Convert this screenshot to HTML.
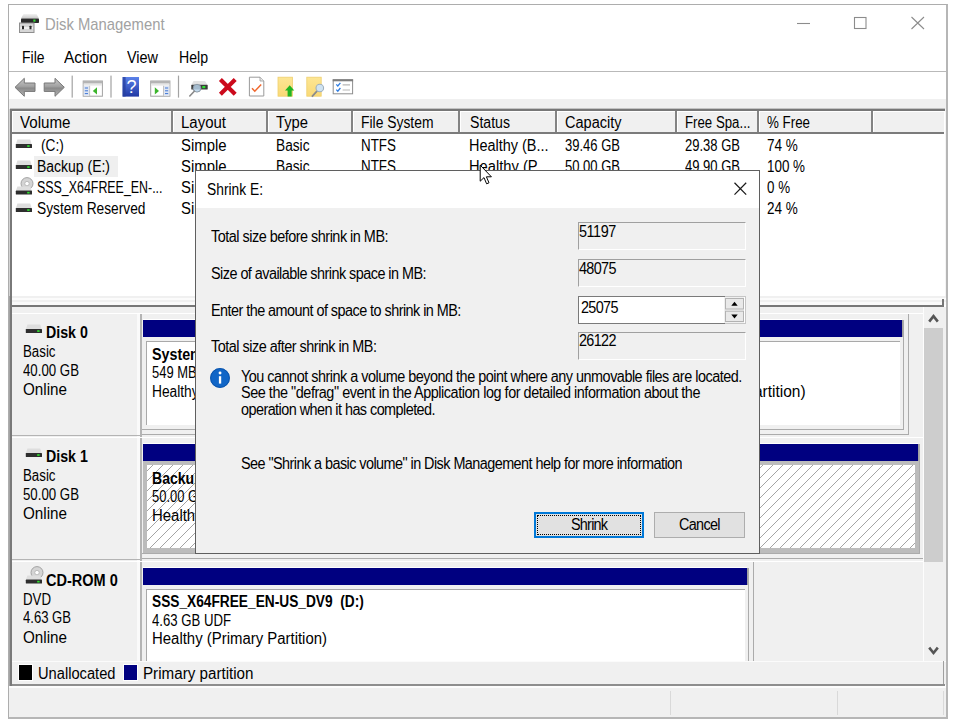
<!DOCTYPE html>
<html lang="en">
<head>
<meta charset="utf-8">
<title>Disk Management</title>
<style>
html,body{margin:0;padding:0;background:#fff;}
body{width:953px;height:723px;position:relative;overflow:hidden;font-family:"Liberation Sans",sans-serif;font-size:16px;color:#000;}
.a{position:absolute;}
.t{position:absolute;white-space:pre;line-height:20px;height:20px;transform-origin:0 50%;}
.hs{position:absolute;top:111px;width:2px;height:21px;background:#838383;border-right:1px solid #fff;}
.vbox{position:absolute;left:578px;width:166px;height:26px;background:#f0f0f0;border:1px solid;border-color:#a0a0a0 #fff #fff #a0a0a0;}
.navy{position:absolute;background:#000080;height:17px;}
.pbox{position:absolute;background:#fff;border-left:1px solid #a9a9a9;border-top:1px solid #a9a9a9;}
</style>
</head>
<body>
<div class="a" style="left:8px;top:4px;width:937px;height:712px;border:1px solid #adadad;border-right:2px solid #b6b6b6;border-bottom:2px solid #b6b6b6;background:#fff;"></div>
<svg class="a" style="left:18px;top:13px" width="23" height="21" viewBox="0 0 23 21">
<defs><linearGradient id="gt" x1="0" y1="0" x2="0" y2="1"><stop offset="0" stop-color="#f2f2f2"/><stop offset="1" stop-color="#c9c9c9"/></linearGradient></defs>
<path d="M5.5 1H18.5L21 5.5H3Z" fill="url(#gt)"/>
<rect x="3" y="5.5" width="18" height="4.5" rx="0.8" fill="#2b2b2b"/>
<rect x="15.3" y="6.5" width="2.2" height="2.2" fill="#35d335"/>
<rect x="1.5" y="10" width="14.5" height="9.5" fill="#d6d6d6" stroke="#8e8e8e" stroke-width="1"/>
<rect x="2.5" y="14" width="12.5" height="2" fill="#efefef"/>
<rect x="4" y="12.7" width="2" height="3.6" rx="0.6" fill="#2a2a2a"/>
<rect x="11.5" y="12.7" width="2" height="3.6" rx="0.6" fill="#2a2a2a"/>
</svg>
<svg class="a" style="left:790px;top:10px" width="150" height="28" viewBox="0 0 150 28">
<path d="M7 13.5H20" stroke="#8c8c8c" stroke-width="1.1" fill="none"/>
<rect x="64.5" y="7.5" width="11.5" height="11" stroke="#8c8c8c" stroke-width="1.1" fill="none"/>
<path d="M121.5 7L134 19M134 7L121.5 19" stroke="#8c8c8c" stroke-width="1.1" fill="none"/>
</svg>
<div class="a" style="left:9px;top:71px;width:937px;height:1px;background:#b9b9b9;"></div>
<svg class="a" style="left:9px;top:72px" width="360" height="28" viewBox="9 72 360 28">
<defs>
<linearGradient id="ga" x1="0" y1="0" x2="0" y2="1"><stop offset="0" stop-color="#c9c9c9"/><stop offset="0.45" stop-color="#a2a2a2"/><stop offset="0.55" stop-color="#8a8a8a"/><stop offset="1" stop-color="#b5b5b5"/></linearGradient>
<linearGradient id="gh" x1="0" y1="0" x2="0" y2="1"><stop offset="0" stop-color="#5b82ea"/><stop offset="1" stop-color="#2038a4"/></linearGradient>
<linearGradient id="gy" x1="0" y1="0" x2="0" y2="1"><stop offset="0" stop-color="#fde694"/><stop offset="1" stop-color="#f9d976"/></linearGradient>
</defs>
<!-- back / forward -->
<path d="M15 87.3L24.3 78.3V83H35V91.4H24.3V96.3Z" fill="url(#ga)" stroke="#777" stroke-width="1" stroke-linejoin="round"/>
<path d="M64.3 87.3L55 78.3V83H44.2V91.4H55V96.3Z" fill="url(#ga)" stroke="#777" stroke-width="1" stroke-linejoin="round"/>
<rect x="71.6" y="75.6" width="1.2" height="22" fill="#a3a3a3"/>
<!-- console tree -->
<rect x="83.2" y="81" width="19.2" height="15.2" fill="#fff" stroke="#a2a2a2" stroke-width="1"/>
<rect x="83.2" y="81" width="19.2" height="2.6" fill="#b4b4b4"/>
<rect x="83.7" y="83.6" width="18.2" height="2" fill="#e6e6e6"/>
<rect x="83.7" y="85.8" width="5.6" height="10" fill="#dfe6f3"/>
<path d="M84.8 88H88M84.8 90.8H88M84.8 93.6H88" stroke="#3f77d6" stroke-width="1"/>
<rect x="89.3" y="85.8" width="0.8" height="10" fill="#b5b5b5"/>
<path d="M97 87.3V94.6L92.8 91Z" fill="#3cb52c"/>
<rect x="110.4" y="75.6" width="1.2" height="22" fill="#a3a3a3"/>
<!-- help -->
<rect x="122.6" y="77" width="16.4" height="19.6" fill="url(#gh)"/>
<rect x="122.6" y="77" width="3" height="19.6" fill="#27409f" opacity="0.75"/>
<text x="131.6" y="93" font-family="Liberation Sans, sans-serif" font-size="18" fill="#fff" text-anchor="middle">?</text>
<!-- action pane -->
<rect x="150.7" y="81" width="19.2" height="15.2" fill="#fff" stroke="#a2a2a2" stroke-width="1"/>
<rect x="150.7" y="81" width="19.2" height="2.6" fill="#b4b4b4"/>
<rect x="151.2" y="83.6" width="18.2" height="2" fill="#e6e6e6"/>
<rect x="163.8" y="85.8" width="5.6" height="10" fill="#dfe6f3"/>
<path d="M165 88H168.2M165 90.8H168.2M165 93.6H168.2" stroke="#3f77d6" stroke-width="1"/>
<rect x="163" y="85.8" width="0.8" height="10" fill="#b5b5b5"/>
<path d="M154.8 87.3V94.6L159 91Z" fill="#3cb52c"/>
<rect x="177.9" y="75.6" width="1.2" height="22" fill="#a3a3a3"/>
<!-- connect -->
<path d="M193.5 81H205L207.5 84.8H191.5Z" fill="#e2e2e2"/>
<rect x="191.3" y="84.8" width="16.4" height="4.8" rx="0.6" fill="#3a3a3a"/>
<rect x="202.3" y="86" width="3" height="2.2" fill="#2fe02f"/>
<circle cx="197" cy="88.2" r="3.9" fill="#b9d4ea" fill-opacity="0.85" stroke="#8c9aa6" stroke-width="1"/>
<path d="M194.3 91.2L189.8 96" stroke="#8a8a8a" stroke-width="1.6" stroke-linecap="round"/>
<!-- red X -->
<path d="M220.4 79.6L235.2 94.2M235.2 79.6L220.4 94.2" stroke="#cc0a1c" stroke-width="4.2" fill="none"/>
<!-- doc check -->
<path d="M249.4 77.2H260L263.8 81V96H249.4Z" fill="#fff" stroke="#9a9a9a" stroke-width="1"/>
<path d="M260 77.2V81H263.8" fill="#e8e8e8" stroke="#9a9a9a" stroke-width="0.8"/>
<path d="M252 88.2L254.8 91.2L261.2 84.6" stroke="#f0672d" stroke-width="1.5" fill="none"/>
<!-- folder up -->
<rect x="278" y="77.2" width="14.4" height="19" fill="url(#gy)" stroke="#efcf6e" stroke-width="0.8"/>
<path d="M285 90.4L289.7 85.3L294.3 90.4H291.7V96.5H287.6V90.4Z" fill="#21b521"/>
<!-- folder search -->
<rect x="306.8" y="77.2" width="14.4" height="19" fill="url(#gy)" stroke="#efcf6e" stroke-width="0.8"/>
<path d="M317.2 90.8L312.4 96.2" stroke="#8c8c8c" stroke-width="1.8" stroke-linecap="round"/>
<circle cx="319.8" cy="88" r="3.8" fill="#cfe3f2" stroke="#9fb0bd" stroke-width="1.1"/>
<!-- checklist -->
<rect x="333.2" y="79.8" width="19.4" height="14" fill="#fff" stroke="#8d8d8d" stroke-width="1"/>
<rect x="332.7" y="79.3" width="20.4" height="2" fill="#7d7d7d"/>
<path d="M336.3 84.4L337.8 86L340.4 82.8M336.3 89.6L337.8 91.2L340.4 88" stroke="#2f7de1" stroke-width="1.3" fill="none"/>
<path d="M342.6 84.8H350M342.6 90H350" stroke="#b7b7b7" stroke-width="1.2"/>
</svg>
<div class="a" style="left:9px;top:99px;width:937px;height:10px;background:#f0f0f0;"></div>
<div class="a" style="left:10px;top:108px;width:935px;height:1px;background:#c3c3c3;"></div>
<div class="a" style="left:10px;top:109px;width:935px;height:187px;background:#fff;border-top:2px solid #777;box-sizing:border-box;"></div>
<div class="a" style="left:12px;top:111px;width:932px;height:21px;background:#f0f0f0;border-top:1px solid #fff;border-left:1px solid #fff;box-sizing:border-box;"></div>
<div class="a" style="left:12px;top:132px;width:932px;height:2px;background:#7b7b7b;"></div>
<div class="hs" style="left:171px;"></div>
<div class="hs" style="left:266px;"></div>
<div class="hs" style="left:351px;"></div>
<div class="hs" style="left:458px;"></div>
<div class="hs" style="left:555px;"></div>
<div class="hs" style="left:675px;"></div>
<div class="hs" style="left:757px;"></div>
<div class="hs" style="left:871px;"></div>
<div class="a" style="left:945px;top:109px;width:1px;height:190px;background:#f4f4f4;"></div>
<div class="a" style="left:34px;top:156px;width:84px;height:21px;background:#efefef;"></div>
<svg class="a" style="left:14.7px;top:139px" width="18" height="11" viewBox="0 0 18 11"><path d="M2.4 0.4H15.2L16.6 5H1Z" fill="#dedede"/><rect x="0.8" y="5" width="16.2" height="4" rx="0.6" fill="#2e2e2e"/><rect x="12.2" y="6.2" width="2.4" height="1.7" fill="#2fe12f"/></svg>
<svg class="a" style="left:14.7px;top:160.2px" width="18" height="11" viewBox="0 0 18 11"><path d="M2.4 0.4H15.2L16.6 5H1Z" fill="#dedede"/><rect x="0.8" y="5" width="16.2" height="4" rx="0.6" fill="#2e2e2e"/><rect x="12.2" y="6.2" width="2.4" height="1.7" fill="#2fe12f"/></svg>
<svg class="a" style="left:14.7px;top:176.8px" width="19" height="19" viewBox="0 0 19 19"><circle cx="12" cy="6.6" r="6" fill="#d4d4d4" stroke="#9c9c9c" stroke-width="0.9"/><circle cx="12" cy="6.6" r="2.2" fill="#fff" stroke="#aaa" stroke-width="0.7"/><path d="M2.4 9.6H15.2L16.6 13.6H1Z" fill="#dedede"/><rect x="0.8" y="13.6" width="16.2" height="4" rx="0.6" fill="#2e2e2e"/><rect x="12.2" y="14.8" width="2.4" height="1.7" fill="#2fe12f"/></svg>
<svg class="a" style="left:14.7px;top:202.8px" width="18" height="11" viewBox="0 0 18 11"><path d="M2.4 0.4H15.2L16.6 5H1Z" fill="#dedede"/><rect x="0.8" y="5" width="16.2" height="4" rx="0.6" fill="#2e2e2e"/><rect x="12.2" y="6.2" width="2.4" height="1.7" fill="#2fe12f"/></svg>
<div class="a" style="left:12px;top:296px;width:934px;height:9px;background:linear-gradient(#f0f0f0 0,#f0f0f0 2px,#fbfbfb 2px,#fbfbfb 4px,#f0f0f0 4px,#f0f0f0 6px,#fafafa 6px,#fafafa 9px);"></div>
<div class="a" style="left:12px;top:305px;width:932px;height:2px;background:#777;"></div>
<div class="a" style="left:942px;top:299px;width:2px;height:7px;background:#777;"></div>
<div class="a" style="left:12px;top:307px;width:934px;height:378px;background:#f0f0f0;"></div>
<div class="a" style="left:12px;top:313px;width:911px;height:1px;background:#fff;"></div>
<div class="a" style="left:137px;top:314px;width:3px;height:123px;background:#fafafa;"></div>
<div class="a" style="left:140px;top:314px;width:2px;height:123px;background:#b4b4b4;"></div>
<div class="a" style="left:908px;top:314px;width:1px;height:121px;background:#ababab;"></div>
<div class="a" style="left:903px;top:320px;width:1px;height:110px;background:#ababab;"></div>
<div class="a" style="left:12px;top:435px;width:128px;height:1px;background:#b4b4b4;"></div>
<div class="a" style="left:142px;top:429px;width:762px;height:1px;background:#ababab;"></div>
<div class="a" style="left:142px;top:434px;width:767px;height:1px;background:#ababab;"></div>
<div class="a" style="left:143px;top:319px;width:759px;height:1px;background:#fff;"></div>
<div class="navy" style="left:143px;top:320px;width:759px;"></div>
<div class="a" style="left:902px;top:320px;width:1px;height:17px;background:#a2a2a2;"></div>
<div class="pbox" style="left:146px;top:341px;width:112px;height:83px;"></div>
<div class="pbox" style="left:263px;top:341px;width:636px;height:83px;"></div>
<div class="a" style="left:12px;top:437px;width:911px;height:1px;background:#fff;"></div>
<div class="a" style="left:137px;top:438px;width:3px;height:123px;background:#fafafa;"></div>
<div class="a" style="left:140px;top:438px;width:2px;height:123px;background:#b4b4b4;"></div>
<div class="a" style="left:919px;top:444px;width:1px;height:110px;background:#ababab;"></div>
<div class="a" style="left:12px;top:559px;width:128px;height:1px;background:#b4b4b4;"></div>
<div class="a" style="left:142px;top:553px;width:778px;height:1px;background:#ababab;"></div>
<div class="a" style="left:142px;top:558px;width:781px;height:1px;background:#ababab;"></div>
<div class="a" style="left:143px;top:443px;width:775px;height:1px;background:#fff;"></div>
<div class="navy" style="left:143px;top:444px;width:775px;"></div>
<div class="a" style="left:918px;top:444px;width:1px;height:17px;background:#a2a2a2;"></div>
<div class="a" style="left:143px;top:461px;width:776px;height:92px;background:#bcbcbc;"></div>
<svg class="a" style="left:147px;top:465px" width="768" height="83" viewBox="0 0 768 83">
<defs><pattern id="hatch" width="10" height="10" patternUnits="userSpaceOnUse"><rect width="10" height="10" fill="#fff"/><path d="M-1 7L7 -1M5 11L11 5" stroke="#949494" stroke-width="0.85"/></pattern></defs>
<rect width="768" height="83" fill="url(#hatch)"/></svg>
<div class="a" style="left:12px;top:561px;width:911px;height:1px;background:#fff;"></div>
<div class="a" style="left:137px;top:562px;width:3px;height:99px;background:#fafafa;"></div>
<div class="a" style="left:140px;top:562px;width:2px;height:99px;background:#b4b4b4;"></div>
<div class="a" style="left:753px;top:562px;width:1px;height:99px;background:#ababab;"></div>
<div class="a" style="left:748px;top:568px;width:1px;height:93px;background:#ababab;"></div>
<div class="a" style="left:143px;top:567px;width:604px;height:1px;background:#fff;"></div>
<div class="navy" style="left:143px;top:568px;width:604px;"></div>
<div class="a" style="left:747px;top:568px;width:1px;height:17px;background:#a2a2a2;"></div>
<div class="pbox" style="left:146px;top:589px;width:598px;height:80px;"></div>
<svg class="a" style="left:25.3px;top:324px" width="18" height="11" viewBox="0 0 18 11"><path d="M2.4 0.4H15.2L16.6 5H1Z" fill="#dedede"/><rect x="0.8" y="5" width="16.2" height="4" rx="0.6" fill="#2e2e2e"/><rect x="12.2" y="6.2" width="2.4" height="1.7" fill="#2fe12f"/></svg>
<svg class="a" style="left:25.3px;top:448px" width="18" height="11" viewBox="0 0 18 11"><path d="M2.4 0.4H15.2L16.6 5H1Z" fill="#dedede"/><rect x="0.8" y="5" width="16.2" height="4" rx="0.6" fill="#2e2e2e"/><rect x="12.2" y="6.2" width="2.4" height="1.7" fill="#2fe12f"/></svg>
<svg class="a" style="left:25.3px;top:566px" width="19" height="19" viewBox="0 0 19 19"><circle cx="12" cy="6.6" r="6" fill="#d4d4d4" stroke="#9c9c9c" stroke-width="0.9"/><circle cx="12" cy="6.6" r="2.2" fill="#fff" stroke="#aaa" stroke-width="0.7"/><path d="M2.4 9.6H15.2L16.6 13.6H1Z" fill="#dedede"/><rect x="0.8" y="13.6" width="16.2" height="4" rx="0.6" fill="#2e2e2e"/><rect x="12.2" y="14.8" width="2.4" height="1.7" fill="#2fe12f"/></svg>
<div class="a" style="left:923px;top:307px;width:1px;height:354px;background:#fdfdfd;"></div>
<div class="a" style="left:924px;top:307px;width:22px;height:354px;background:#f0f0f0;"></div>
<div class="a" style="left:924px;top:328px;width:19px;height:234px;background:#cdcdcd;"></div>
<svg class="a" style="left:925px;top:307px" width="19" height="354" viewBox="0 0 19 354">
<path d="M4.2 14.6L8.5 9.2L12.8 14.6" stroke="#555" stroke-width="2.6" fill="none"/>
<path d="M4.2 340.6L8.5 346L12.8 340.6" stroke="#555" stroke-width="2.6" fill="none"/></svg>
<div class="a" style="left:12px;top:661px;width:934px;height:23px;background:#f0f0f0;border-top:1px solid #fbfbfb;box-sizing:border-box;"></div>
<div class="a" style="left:18px;top:664px;width:13px;height:15px;background:#000;border:1px solid #fff;"></div>
<div class="a" style="left:123px;top:664px;width:13px;height:15px;background:#000080;border:1px solid #fff;"></div>
<div class="a" style="left:943px;top:661px;width:1px;height:24px;background:#a0a0a0;"></div>
<div class="a" style="left:10px;top:684px;width:935px;height:2px;background:#8e8e8e;"></div>
<div class="a" style="left:9px;top:686px;width:937px;height:2px;background:#fcfcfc;"></div>
<div class="a" style="left:9px;top:688px;width:937px;height:29px;background:#f0f0f0;"></div>
<div class="a" style="left:670px;top:691px;width:1px;height:24px;background:#d9d9d9;"></div>
<div class="a" style="left:837px;top:691px;width:1px;height:24px;background:#d9d9d9;"></div>
<div class="a" style="left:943px;top:691px;width:1px;height:24px;background:#d9d9d9;"></div>
<div class="a" style="left:9px;top:109px;width:1px;height:187px;background:#d4d4d4;"></div>
<div class="a" style="left:9px;top:296px;width:1px;height:390px;background:#a4a4a4;"></div>
<div class="a" style="left:10px;top:109px;width:2px;height:577px;background:#797979;"></div>

<!-- base text -->
<div class="t" style="left:45.00px;top:15.00px;font-size:17px;color:#a2a2a2;transform:scaleX(0.8722);">Disk Management</div>
<div class="t" style="left:21.50px;top:47.80px;transform:scaleX(0.8727);">File</div>
<div class="t" style="left:64.00px;top:47.80px;transform:scaleX(0.9670);">Action</div>
<div class="t" style="left:127.00px;top:47.80px;transform:scaleX(0.9014);">View</div>
<div class="t" style="left:179.00px;top:47.80px;transform:scaleX(0.8813);">Help</div>
<div class="t" style="left:19.50px;top:113.30px;transform:scaleX(0.9461);">Volume</div>
<div class="t" style="left:180.50px;top:113.30px;transform:scaleX(0.9366);">Layout</div>
<div class="t" style="left:275.50px;top:113.30px;transform:scaleX(0.9225);">Type</div>
<div class="t" style="left:360.50px;top:113.30px;transform:scaleX(0.8675);">File System</div>
<div class="t" style="left:470.00px;top:113.30px;transform:scaleX(0.8818);">Status</div>
<div class="t" style="left:564.80px;top:113.30px;transform:scaleX(0.9076);">Capacity</div>
<div class="t" style="left:684.80px;top:113.30px;transform:scaleX(0.8275);">Free Spa...</div>
<div class="t" style="left:767.00px;top:113.30px;transform:scaleX(0.8337);">% Free</div>
<div class="t" style="left:40.80px;top:135.80px;transform:scaleX(0.8553);">(C:)</div>
<div class="t" style="left:180.50px;top:135.80px;transform:scaleX(0.9304);">Simple</div>
<div class="t" style="left:275.50px;top:135.80px;transform:scaleX(0.8562);">Basic</div>
<div class="t" style="left:360.50px;top:135.80px;transform:scaleX(0.8377);">NTFS</div>
<div class="t" style="left:469.20px;top:135.80px;transform:scaleX(0.9031);">Healthy (B...</div>
<div class="t" style="left:565.00px;top:135.80px;transform:scaleX(0.8135);">39.46 GB</div>
<div class="t" style="left:685.00px;top:135.80px;transform:scaleX(0.8135);">29.38 GB</div>
<div class="t" style="left:767.00px;top:135.80px;transform:scaleX(0.8446);">74 %</div>
<div class="t" style="left:37.00px;top:156.90px;transform:scaleX(0.8733);">Backup (E:)</div>
<div class="t" style="left:180.50px;top:156.90px;transform:scaleX(0.9304);">Simple</div>
<div class="t" style="left:275.50px;top:156.90px;transform:scaleX(0.8562);">Basic</div>
<div class="t" style="left:360.50px;top:156.90px;transform:scaleX(0.8377);">NTFS</div>
<div class="t" style="left:469.20px;top:156.90px;transform:scaleX(0.9189);">Healthy (P...</div>
<div class="t" style="left:565.00px;top:156.90px;transform:scaleX(0.8135);">50.00 GB</div>
<div class="t" style="left:685.00px;top:156.90px;transform:scaleX(0.8135);">49.90 GB</div>
<div class="t" style="left:767.00px;top:156.90px;transform:scaleX(0.8375);">100 %</div>
<div class="t" style="left:37.00px;top:178.20px;transform:scaleX(0.7754);">SSS_X64FREE_EN-...</div>
<div class="t" style="left:180.50px;top:178.20px;transform:scaleX(0.9304);">Simple</div>
<div class="t" style="left:275.50px;top:178.20px;transform:scaleX(0.8562);">Basic</div>
<div class="t" style="left:360.50px;top:178.20px;transform:scaleX(0.8209);">UDF</div>
<div class="t" style="left:469.20px;top:178.20px;transform:scaleX(0.9189);">Healthy (P...</div>
<div class="t" style="left:565.00px;top:178.20px;transform:scaleX(0.8600);">4.63 GB</div>
<div class="t" style="left:685.00px;top:178.20px;transform:scaleX(0.8600);">0 MB</div>
<div class="t" style="left:767.00px;top:178.20px;transform:scaleX(0.8340);">0 %</div>
<div class="t" style="left:37.00px;top:199.40px;transform:scaleX(0.8593);">System Reserved</div>
<div class="t" style="left:180.50px;top:199.40px;transform:scaleX(0.9304);">Simple</div>
<div class="t" style="left:275.50px;top:199.40px;transform:scaleX(0.8562);">Basic</div>
<div class="t" style="left:360.50px;top:199.40px;transform:scaleX(0.8377);">NTFS</div>
<div class="t" style="left:469.20px;top:199.40px;transform:scaleX(0.8974);">Healthy (S...</div>
<div class="t" style="left:565.00px;top:199.40px;transform:scaleX(0.8600);">549 MB</div>
<div class="t" style="left:685.00px;top:199.40px;transform:scaleX(0.8600);">132 MB</div>
<div class="t" style="left:767.00px;top:199.40px;transform:scaleX(0.8446);">24 %</div>
<div class="t" style="left:45.80px;top:323.40px;font-weight:bold;transform:scaleX(0.8867);">Disk 0</div>
<div class="t" style="left:23.00px;top:342.10px;transform:scaleX(0.8307);">Basic</div>
<div class="t" style="left:23.00px;top:360.60px;transform:scaleX(0.8283);">40.00 GB</div>
<div class="t" style="left:23.00px;top:380.10px;transform:scaleX(0.9514);">Online</div>
<div class="t" style="left:45.80px;top:447.40px;font-weight:bold;transform:scaleX(0.8867);">Disk 1</div>
<div class="t" style="left:23.00px;top:466.10px;transform:scaleX(0.8307);">Basic</div>
<div class="t" style="left:23.00px;top:484.60px;transform:scaleX(0.8283);">50.00 GB</div>
<div class="t" style="left:23.00px;top:504.10px;transform:scaleX(0.9514);">Online</div>
<div class="t" style="left:45.80px;top:570.90px;font-weight:bold;transform:scaleX(0.9076);">CD-ROM 0</div>
<div class="t" style="left:23.00px;top:589.60px;transform:scaleX(0.8289);">DVD</div>
<div class="t" style="left:23.00px;top:608.10px;transform:scaleX(0.8177);">4.63 GB</div>
<div class="t" style="left:23.00px;top:627.60px;transform:scaleX(0.9514);">Online</div>
<div class="t" style="left:152.00px;top:345.30px;font-weight:bold;transform:scaleX(0.8917);width:120px;overflow:hidden;">System Reserved</div>
<div class="t" style="left:152.00px;top:362.80px;transform:scaleX(0.8090);">549 MB NTFS</div>
<div class="t" style="left:152.00px;top:381.80px;transform:scaleX(0.8600);width:113px;overflow:hidden;">Healthy (System, Active, Primary Partition)</div>
<div class="t" style="left:269.00px;top:345.30px;font-weight:bold;transform:scaleX(0.8712);">(C:)</div>
<div class="t" style="left:269.00px;top:362.80px;transform:scaleX(0.8082);">39.46 GB NTFS</div>
<div class="t" style="right:147.00px;top:382.10px;transform-origin:100% 50%;transform:scaleX(0.9689);">Healthy (Boot, Page File, Crash Dump, Primary Partition)</div>
<div class="t" style="left:152.00px;top:468.80px;font-weight:bold;transform:scaleX(0.8785);">Backup  (E:)</div>
<div class="t" style="left:152.00px;top:486.80px;transform:scaleX(0.8082);">50.00 GB NTFS</div>
<div class="t" style="left:152.00px;top:505.80px;transform:scaleX(0.9328);">Healthy (Primary Partition)</div>
<div class="t" style="left:152.00px;top:591.80px;font-weight:bold;transform:scaleX(0.8568);">SSS_X64FREE_EN-US_DV9  (D:)</div>
<div class="t" style="left:152.00px;top:610.60px;transform:scaleX(0.8226);">4.63 GB UDF</div>
<div class="t" style="left:152.00px;top:629.40px;transform:scaleX(0.9328);">Healthy (Primary Partition)</div>
<div class="t" style="left:38.00px;top:663.80px;transform:scaleX(0.9172);">Unallocated</div>
<div class="t" style="left:143.00px;top:663.80px;transform:scaleX(0.9486);">Primary partition</div>
<div class="a" style="left:195px;top:170px;width:563px;height:382px;border:1px solid #5f5f5f;background:#f0f0f0;z-index:5;box-sizing:content-box;"></div>
<div class="a" style="left:196px;top:171px;width:563px;height:37px;background:#fff;z-index:5;"></div>
<svg class="a" style="left:730px;top:178px;z-index:6" width="22" height="22" viewBox="0 0 22 22"><path d="M4.5 4.8L16.2 16.6M16.2 4.8L4.5 16.6" stroke="#1a1a1a" stroke-width="1.25" fill="none"/></svg>
<div class="vbox" style="top:222px;z-index:6;"></div>
<div class="vbox" style="top:259px;z-index:6;"></div>
<div class="vbox" style="top:332px;z-index:6;"></div>
<div class="a" style="left:578px;top:296px;width:166px;height:26px;background:#fff;border:1px solid #c6c6c6;z-index:6;"></div>
<div class="a" style="left:578px;top:296px;width:146px;height:26px;background:#fff;border:1px solid #7a7a7a;border-right:none;z-index:6;"></div>
<div class="a" style="left:724px;top:297px;width:20px;height:26px;background:#f0f0f0;z-index:6;"></div>
<svg class="a" style="left:724px;top:297px;z-index:7" width="22" height="26" viewBox="0 0 22 26">
<rect x="1.5" y="1.5" width="18" height="10.5" fill="#e9e9e9" stroke="#b2b2b2" stroke-width="1"/>
<rect x="1.5" y="14.2" width="18" height="10.3" fill="#e9e9e9" stroke="#b2b2b2" stroke-width="1"/>
<path d="M7.3 8.8L10.5 4.8L13.7 8.8Z" fill="#000"/><path d="M7.3 17.4L10.5 21.4L13.7 17.4Z" fill="#000"/></svg>
<svg class="a" style="left:209px;top:367px;z-index:6" width="22" height="22" viewBox="0 0 22 22">
<circle cx="11" cy="11" r="9.9" fill="#1166c7"/><circle cx="11" cy="11" r="9.4" fill="none" stroke="#0a4fa3" stroke-width="0.8"/>
<rect x="9.9" y="9.2" width="2.3" height="7.4" fill="#fff"/><circle cx="11.05" cy="6" r="1.45" fill="#fff"/></svg>
<div class="a" style="left:534px;top:512px;width:106px;height:22px;background:#e1e1e1;border:2px solid #0078d7;z-index:6;"></div>
<div class="a" style="left:537px;top:515px;width:102px;height:18px;border:1px dotted #000;z-index:6;"></div>
<div class="a" style="left:654px;top:512px;width:89px;height:24px;background:#e1e1e1;border:1px solid #adadad;z-index:6;"></div>
<svg class="a" style="left:479px;top:164px;z-index:20" width="14" height="22" viewBox="0 0 14 22">
<path d="M1.2 1.2V17.2L5 13.6L7.6 19.8L10 18.8L7.4 12.8H12.4Z" fill="#fff" stroke="#000" stroke-width="1"/></svg>

<!-- dialog text -->
<div class="t" style="left:206.80px;top:179.60px;z-index:8;transform:scaleX(0.8626);">Shrink E:</div>
<div class="t" style="left:210.80px;top:227.00px;z-index:8;letter-spacing:-0.540px;transform:scaleX(0.9);">Total size before shrink in MB:</div>
<div class="t" style="left:210.80px;top:264.30px;z-index:8;letter-spacing:-0.586px;transform:scaleX(0.9);">Size of available shrink space in MB:</div>
<div class="t" style="left:210.80px;top:300.80px;z-index:8;letter-spacing:-0.591px;transform:scaleX(0.9);">Enter the amount of space to shrink in MB:</div>
<div class="t" style="left:210.80px;top:336.80px;z-index:8;letter-spacing:-0.540px;transform:scaleX(0.9);">Total size after shrink in MB:</div>
<div class="t" style="left:579.20px;top:221.50px;z-index:8;letter-spacing:-0.485px;transform:scaleX(0.9);">51197</div>
<div class="t" style="left:579.20px;top:258.60px;z-index:8;letter-spacing:-0.722px;transform:scaleX(0.9);">48075</div>
<div class="t" style="left:581.20px;top:297.50px;z-index:8;letter-spacing:-0.722px;transform:scaleX(0.9);">25075</div>
<div class="t" style="left:579.20px;top:331.20px;z-index:8;letter-spacing:-0.722px;transform:scaleX(0.9);">26122</div>
<div class="t" style="left:241.30px;top:367.00px;z-index:8;letter-spacing:-0.540px;transform:scaleX(0.9);">You cannot shrink a volume beyond the point where any unmovable files are located.</div>
<div class="t" style="left:241.30px;top:383.20px;z-index:8;letter-spacing:-0.494px;transform:scaleX(0.9);">See the "defrag" event in the Application log for detailed information about the</div>
<div class="t" style="left:241.30px;top:399.50px;z-index:8;letter-spacing:-0.602px;transform:scaleX(0.9);">operation when it has completed.</div>
<div class="t" style="left:241.30px;top:453.80px;z-index:8;letter-spacing:-0.603px;transform:scaleX(0.9);">See "Shrink a basic volume" in Disk Management help for more information</div>
<div class="t" style="left:570.50px;top:515.00px;z-index:8;letter-spacing:-0.838px;transform:scaleX(0.9);">Shrink</div>
<div class="t" style="left:678.80px;top:515.00px;z-index:8;letter-spacing:-0.747px;transform:scaleX(0.9);">Cancel</div>
</body>
</html>
